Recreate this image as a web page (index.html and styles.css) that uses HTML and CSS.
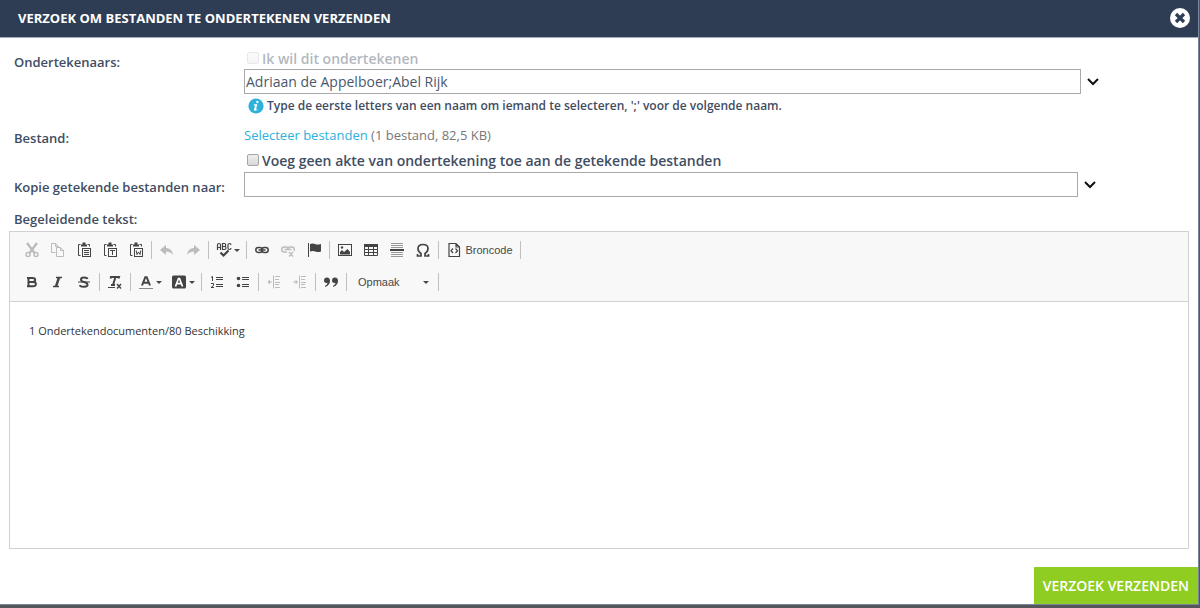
FILE: index.html
```html
<!DOCTYPE html>
<html lang="nl">
<head>
<meta charset="utf-8">
<title>Verzoek om bestanden te ondertekenen verzenden</title>
<link rel="stylesheet" href="styles.css">
</head>
<body>
<main class="dialog">
  <header class="header">
    <h1 class="title">VERZOEK OM BESTANDEN TE ONDERTEKENEN VERZENDEN</h1>
    <button class="close" type="button" aria-label="Sluiten"><svg width="20" height="20" viewBox="0 0 20 20"><circle cx="10" cy="10" r="10" fill="#fff"/><path d="M6 6l8 8M14 6l-8 8" stroke="#2e3d54" stroke-width="3.2"/></svg></button>
  </header>
  <form class="form">
    <div class="row">
      <label class="label" for="signers">Ondertekenaars:</label>
      <div class="field">
        <div class="check disabled"><input type="checkbox" id="self" disabled><label for="self">Ik wil dit ondertekenen</label></div>
        <div class="picker"><input class="text" type="text" id="signers" value="Adriaan de Appelboer;Abel Rijk"><button class="chevron" type="button" aria-label="Toon ondertekenaars"><svg width="12" height="8" viewBox="0 0 12 8"><path d="M1 1l5 5 5-5" fill="none" stroke="#111" stroke-width="2"/></svg></button></div>
        <p class="hint"><svg width="16" height="16" viewBox="0 0 16 16"><circle cx="8" cy="8" r="7.6" fill="#2eb1da"/><path d="M9.4 2.8a1.2 1.2 0 1 1-.1 2.4 1.2 1.2 0 0 1 .1-2.4zM6 6.3h3.3L8.1 11q-.1.8 1.3.1l-.2 1q-3.7 1.8-3.2-.7l1-4H5.800z" fill="#fff"/></svg>Type de eerste letters van een naam om iemand te selecteren, ';' voor de volgende naam.</p>
      </div>
    </div>
    <div class="row">
      <span class="label">Bestand:</span>
      <div class="field">
        <p class="files"><a href="#bestanden">Selecteer bestanden</a> (1 bestand, 82,5 KB)</p>
        <div class="check"><input type="checkbox" id="deed"><label for="deed">Voeg geen akte van ondertekening toe aan de getekende bestanden</label></div>
      </div>
    </div>
    <div class="row">
      <label class="label" for="copy">Kopie getekende bestanden naar:</label>
      <div class="field">
        <div class="picker short"><input class="text" type="text" id="copy"><button class="chevron" type="button" aria-label="Toon ontvangers"><svg width="12" height="8" viewBox="0 0 12 8"><path d="M1 1l5 5 5-5" fill="none" stroke="#111" stroke-width="2"/></svg></button></div>
      </div>
    </div>
    <label class="label message-label" for="message">Begeleidende tekst:</label>
    <div class="editor">
      <div class="toolbar">
        <div class="tools">
          <button class="tool off" type="button" aria-label="Knippen"><svg viewBox="0 0 16 16"><path d="M3 1l7.500 10M13 1L5.500 11" stroke-width="2.400"/><circle cx="4" cy="12.500" r="2" stroke-width="1.400"/><circle cx="12" cy="12.500" r="2" stroke-width="1.400"/></svg></button>
          <button class="tool off" type="button" aria-label="Kopiëren"><svg viewBox="0 0 16 16"><path d="M5.500 10.500h-4v-9h4l3 3M5.500 1.500v3h3M6.500 5.500h4l3 3v6h-7zM10.500 5.500v3h3"/></svg></button>
          <button class="tool" type="button" aria-label="Plakken"><svg viewBox="0 0 16 16"><path d="M4.500 2.500h-2v11h2M11.500 2.500h2v2" /><path d="M5 3.500h6M6.500 1.500h3" stroke-width="2"/><rect x="6.500" y="6.500" width="8" height="8"/><path d="M8 8.500h5M8 10.500h5M8 12.500h5"/></svg></button>
          <button class="tool" type="button" aria-label="Plakken als tekst"><svg viewBox="0 0 16 16"><path d="M4.500 2.500h-2v11h2M11.500 2.500h2v2"/><path d="M5 3.500h6M6.500 1.500h3" stroke-width="2"/><rect x="6.500" y="6.500" width="8" height="8"/><path d="M8 8.500h5M10.500 8.500V13"/></svg></button>
          <button class="tool" type="button" aria-label="Plakken uit Word"><svg viewBox="0 0 16 16"><path d="M4.500 2.500h-2v11h2M11.500 2.500h2v2"/><path d="M5 3.500h6M6.500 1.500h3" stroke-width="2"/><rect x="6.500" y="6.500" width="8" height="8"/><path d="M8.200 8.500l.8 4 1.500-2.500 1.500 2.500.8-4"/></svg></button>
          <i class="sep"></i>
          <button class="tool off" type="button" aria-label="Ongedaan maken"><svg viewBox="0 0 16 16"><path class="fill" d="M7 3v3q6 0 7 7-2.500-3.500-7-3.500V13L1 8z"/></svg></button>
          <button class="tool off" type="button" aria-label="Opnieuw"><svg viewBox="0 0 16 16"><path class="fill" d="M9 3v3q-6 0-7 7 2.500-3.500 7-3.500V13l6-5z"/></svg></button>
          <i class="sep"></i>
          <button class="tool wide" type="button" aria-label="Spellingcontrole"><svg viewBox="0 0 16 16"><path d="M1.500 8V3q0-1.500 1.500-1.500T4.500 3v5M1.500 5.500h3M6.500 1.500v6h2q1.500 0 1.500-1.500t-1.500-1.500h-2 2Q9.700 4.500 9.700 3T8.500 1.500zM15 3q0-1.500-1.500-1.500T12 3v3q0 1.500 1.500 1.500T15 6" stroke-width="1.200"/><path d="M4.500 10.500l3 3 5-5" stroke-width="2.200"/></svg><b class="arrow"></b></button>
          <i class="sep"></i>
          <button class="tool" type="button" aria-label="Link"><svg viewBox="0 0 16 16"><rect x="1.800" y="5.500" width="6.400" height="5" rx="2.500" stroke-width="1.500"/><rect x="7.800" y="5.500" width="6.400" height="5" rx="2.500" stroke-width="1.500"/><path d="M4.500 8h7" stroke-width="1.500"/></svg></button>
          <button class="tool off" type="button" aria-label="Link verwijderen"><svg viewBox="0 0 16 16"><path d="M7 10H4Q1.700 10 1.700 7.500T4 5h2q2 0 2 2.500Q8 5 10 5h2q2.300 0 2.300 2.500 0 1-.5 1.500M4.500 7.500h7M9 10l4 4.500M13 10l-4 4.500" stroke-width="1.400"/></svg></button>
          <button class="tool" type="button" aria-label="Anker"><svg viewBox="0 0 16 16"><path d="M2.500 1v14"/><path class="fill" d="M4 2q3-1 5 0t6 0v7.500q-3 1-5.500 0T4 9.500z"/></svg></button>
          <i class="sep"></i>
          <button class="tool" type="button" aria-label="Afbeelding"><svg viewBox="0 0 16 16"><rect x="1.500" y="2.500" width="13" height="11"/><path class="fill" d="M3 12.500V10l2-2 2 2 3.500-3 2.500 3v2.500z"/><circle class="fill" cx="5" cy="5.500" r="1.200"/></svg></button>
          <button class="tool" type="button" aria-label="Tabel"><svg viewBox="0 0 16 16"><path class="fill" d="M1 2h14v3H1z"/><path d="M1.500 2.500h13v11h-13zM1 7.500h14M1 10.500h14M5.500 4v10M10.500 4v10"/></svg></button>
          <button class="tool" type="button" aria-label="Horizontale lijn"><svg viewBox="0 0 16 16"><path d="M2 1.500h12M2 3.500h12M2 5.500h12M2 10.500h12M2 12.500h12M2 14.500h12" stroke="#999"/><path d="M1 8h14" stroke-width="2"/></svg></button>
          <button class="tool" type="button" aria-label="Speciaal teken"><svg viewBox="0 0 16 16"><path d="M2.500 12v2H6v-2.500Q3 9.500 3 6.500 3 2.500 8 2.500t5 4q0 3-3 5V14h3.500v-2" stroke-width="1.700"/></svg></button>
          <i class="sep"></i>
          <button class="tool source" type="button"><svg viewBox="0 0 16 16"><path d="M3 1.500h7l3.500 3.500v9.500H3zM10 2v3h3M7 6.500L5 8.700 7 11M9.500 6.500l2 2.200-2 2.300" stroke-width="1.200"/></svg>Broncode</button>
          <i class="sep"></i>
        </div>
        <div class="tools">
          <button class="tool" type="button" aria-label="Vet"><svg viewBox="0 0 16 16"><path d="M4.500 3v10M3 3.900h5.500q2.700 0 2.700 2T8.500 7.900H5h4q2.900 0 2.900 2.200T9 12.200H3" stroke-width="2"/></svg></button>
          <button class="tool" type="button" aria-label="Cursief"><svg viewBox="0 0 16 16"><path d="M6 3.500h6M3 12.500h6" stroke-width="1.400"/><path d="M9 3.500l-3 9" stroke-width="2.400"/></svg></button>
          <button class="tool" type="button" aria-label="Doorhalen"><svg viewBox="0 0 16 16"><path d="M11.500 5Q11 3.500 8 3.500T5 5.500 8 8t3.500 2.500T8 12.700 4 11" stroke-width="2"/><path d="M2 8h12"/></svg></button>
          <i class="sep"></i>
          <button class="tool" type="button" aria-label="Opmaak verwijderen"><svg viewBox="0 0 16 16"><path d="M3.500 4.500l.5-1.500h8l-.5 1.500M4 11h4M8.500 3l-2.500 8" stroke-width="2"/><path d="M1 13.500h7"/><path d="M10 10l4 4.500M14 10l-4 4.500" stroke-width="1.400"/></svg></button>
          <i class="sep"></i>
          <button class="tool wide" type="button" aria-label="Tekstkleur"><svg viewBox="0 0 16 16"><path d="M4 11.500l3.300-8.300h1.400l3.300 8.300M5.500 8.700h5" stroke-width="2"/><path d="M1 14.500h14" stroke="#888"/></svg><b class="arrow"></b></button>
          <button class="tool wide" type="button" aria-label="Achtergrondkleur"><svg viewBox="0 0 16 16"><rect class="fill" x="1" y="1.500" width="14" height="13" rx="1.500"/><path d="M4.500 12.500l3-8h1l3 8M5.500 9.700h5" stroke="#fff" stroke-width="1.700"/></svg><b class="arrow"></b></button>
          <i class="sep"></i>
          <button class="tool" type="button" aria-label="Genummerde lijst"><svg viewBox="0 0 16 16"><path d="M2 3.500l1.500-1v4.500M2 9.500h2.500v2L2 13.500h3"/><path d="M7 3.500h7M7 5.500h7M7 10.500h7M7 12.500h7"/></svg></button>
          <button class="tool" type="button" aria-label="Lijst met opsommingstekens"><svg viewBox="0 0 16 16"><circle class="fill" cx="3.500" cy="4.500" r="1.800"/><circle class="fill" cx="3.500" cy="11.500" r="1.800"/><path d="M7 3.500h7M7 5.500h7M7 10.500h7M7 12.500h7"/></svg></button>
          <i class="sep"></i>
          <button class="tool off" type="button" aria-label="Inspringing verkleinen"><svg viewBox="0 0 16 16"><path d="M7.500 1.500v13M9 2.500h5M9 5.500h4M9 8.500h5M9 10.500h4M9 13.500h5M2 8h4"/><path class="fill" d="M4 5.500v5L1.500 8z"/></svg></button>
          <button class="tool off" type="button" aria-label="Inspringing vergroten"><svg viewBox="0 0 16 16"><path d="M7.500 1.500v13M9 2.500h5M9 5.500h4M9 8.500h5M9 10.500h4M9 13.500h5M1 8h4"/><path class="fill" d="M3.500 5.500v5L6 8z"/></svg></button>
          <i class="sep"></i>
          <button class="tool" type="button" aria-label="Citaatblok"><svg viewBox="0 0 16 16"><path class="fill" d="M4 3.500q3 0 3 3.500 0 4-5 6v-1q2.500-1.500 2.500-3Q1 9.300 1 6.500q0-3 3-3zM12 3.500q3 0 3 3.500 0 4-5 6v-1q2.500-1.500 2.500-3-3.500.3-3.500-2.500 0-3 3-3z"/></svg></button>
          <i class="sep"></i>
          <button class="tool format" type="button">Opmaak<b class="arrow"></b></button>
          <i class="sep"></i>
        </div>
      </div>
      <textarea class="message" id="message">1 Ondertekendocumenten/80 Beschikking</textarea>
    </div>
    <div class="actions"><button class="send" type="submit">VERZOEK VERZENDEN</button></div>
  </form>
</main>
</body>
</html>
```
FILE: styles.css
```css
* { box-sizing: border-box; }
body {
  margin: 0;
  min-height: 100vh;
  display: flex;
  padding: 0 1px 3px 0;
  background: #555659;
  font-family: "Open Sans", sans-serif;
  color: #3f4d63;
}
button { border: 0; padding: 0; background: none; font: inherit; color: inherit; cursor: pointer; }
p, h1 { margin: 0; }
svg { display: block; flex: none; }
.dialog {
  flex: 1;
  display: flex;
  flex-direction: column;
  background: #fff;
  border: solid #78869b;
  border-width: 0 1px 1px 0;
}
.header {
  display: flex;
  align-items: center;
  justify-content: space-between;
  height: 38px;
  padding: 0 8px 1px 18px;
  background: #2e3d54;
  border-bottom: 1px solid #a4abc0;
}
.title { font-size: 13px; font-weight: 700; color: #fff; }
.form { flex: 1; display: flex; flex-direction: column; padding-top: 11px; font-size: 13px; line-height: 20px; }
.row { display: grid; grid-template-columns: 230px 1fr; padding-left: 14px; }
.label { padding-top: 3px; font-weight: 600; }
.check { display: flex; align-items: center; gap: 3px; height: 20px; padding-left: 3px; font-size: 14px; font-weight: 600; }
.check input {
  appearance: none;
  width: 12px;
  height: 12px;
  margin: 0 0 2px;
  border: 1px solid #a5a5a5;
  border-radius: 2px;
  background: linear-gradient(#eee, #d9d9d9);
}
.check.disabled { opacity: 0.4; }
.check.disabled input { opacity: 0.6; }
.picker { display: flex; align-items: center; gap: 6px; padding-right: 99px; }
.picker.short { padding-right: 102px; }
.text {
  flex: 1;
  min-width: 0;
  height: 25px;
  padding: 0 1px;
  border: 1px solid #a9a9a9;
  font: 14px "Open Sans", sans-serif;
  color: #4a586d;
}
.chevron { width: 12px; height: 20px; display: flex; align-items: center; }
.hint { display: flex; align-items: center; gap: 3px; height: 24px; padding-left: 4px; font-size: 12px; font-weight: 600; }
.files { height: 26px; margin-top: 7px; font-size: 13px; color: #777; }
.files a { color: #2eb1da; text-decoration: none; }
.row:nth-child(2) .label { padding-top: 10px; }
.row:nth-child(3) { padding-top: 1px; }
.row:nth-child(3) .label { padding-top: 5px; }
.message-label { padding: 12px 14px 2px; }
.editor {
  flex: 1;
  display: flex;
  flex-direction: column;
  margin: 0 9px;
  border: 1px solid #d1d1d1;
}
.toolbar { padding: 2px 9px 3px; background: #f8f8f8; border-bottom: 1px solid #d1d1d1; }
.tools { display: flex; align-items: center; height: 32px; font: 12px "Liberation Sans", Arial, sans-serif; color: #484848; }
.tool { display: flex; align-items: center; justify-content: center; width: 26px; height: 26px; }
.tool svg { width: 16px; height: 16px; fill: none; stroke: #444; }
.tool .fill { fill: #444; stroke: none; }
.off { opacity: 0.33; }
.wide { width: 33px; gap: 2px; }
.source { width: 77px; gap: 3px; font-size: 11px; }
.format { width: 87px; justify-content: space-between; padding: 0 7px 0 9px; font-size: 11px; }
.arrow { border: 3px solid transparent; border-top-color: #484848; border-bottom: 0; }
.sep { width: 1px; height: 18px; margin: 0 2px; background: #c0c0c0; }
.message {
  flex: 1;
  width: 100%;
  padding: 19px;
  border: 0;
  resize: none;
  outline: 0;
  font: 11px/20px "Open Sans", sans-serif;
  color: #333;
}
.actions { display: flex; justify-content: flex-end; padding-top: 18px; }
.send { height: 37px; padding: 0 9px; background: #8fcd22; color: #fff; font-size: 14px; font-weight: 600; }
```
